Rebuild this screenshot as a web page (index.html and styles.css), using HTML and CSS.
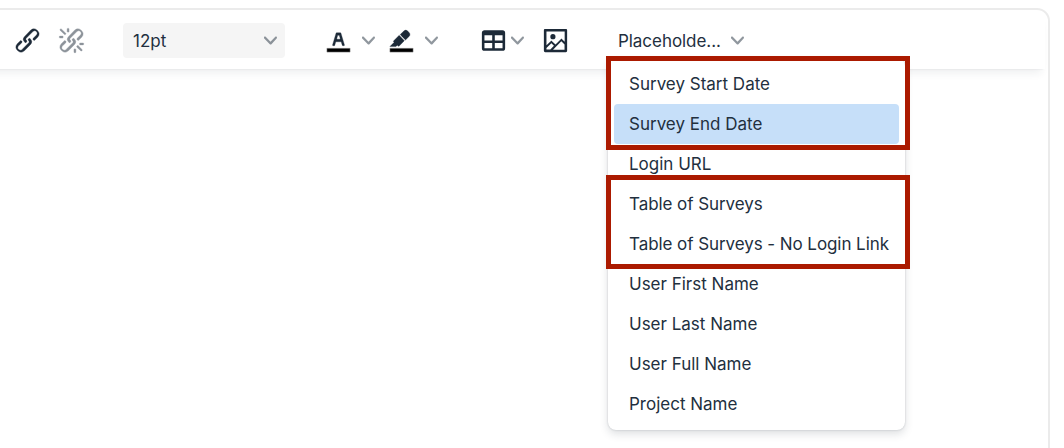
FILE: index.html
```html
<!DOCTYPE html>
<html lang="en">
<head>
<meta charset="utf-8">
<title>Email editor</title>
<link rel="stylesheet" href="styles.css">
</head>
<body>
<svg class="defs" aria-hidden="true">
  <symbol id="chevron" viewBox="0 0 10 10"><path d="M8.7 2.2c.3-.3.8-.3 1 0 .4.4.4.9 0 1.2L5.7 7.8c-.3.3-.9.3-1.2 0L.2 3.4a.8.8 0 0 1 0-1.2c.3-.3.8-.3 1.1 0L5 6l3.7-3.8Z"/></symbol>
  <symbol id="link" viewBox="0 0 24 24"><path d="M6.2 12.3a1 1 0 0 1 1.4 1.4l-2 2a2 2 0 1 0 2.6 2.8l4.8-4.8a1 1 0 0 0 0-1.4 1 1 0 1 1 1.4-1.3 2.9 2.9 0 0 1 0 4L9.6 20a3.9 3.9 0 0 1-5.5-5.5l2-2Zm11.6-.6a1 1 0 0 1-1.4-1.4l2-2a2 2 0 1 0-2.6-2.8L11 10.3a1 1 0 0 0 0 1.4A1 1 0 1 1 9.6 13a2.9 2.9 0 0 1 0-4L14.4 4a3.9 3.9 0 0 1 5.5 5.5l-2 2Z"/></symbol>
</svg>
<div class="editor">
  <div class="toolbar">
    <button class="btn" aria-label="Link"><svg class="icon heavy"><use href="#link"/></svg></button>
    <button class="btn disabled" aria-label="Remove link"><svg class="icon heavy" viewBox="0 0 24 24"><use href="#link" width="24" height="24"/><path d="M7.6 6.3a.8.8 0 0 1-1 1.1L3.3 4.2a.7.7 0 1 1 1-1l3.2 3.1ZM5.1 8.6a.8.8 0 0 1 0 1.5H3a.8.8 0 0 1 0-1.5H5Zm5-3.5a.8.8 0 0 1-1.5 0V3a.8.8 0 0 1 1.5 0V5Zm6 11.8a.8.8 0 0 1 1-1l3.2 3.2a.8.8 0 0 1-1 1L16 17Zm-2.2 2a.8.8 0 0 1 1.5 0V21a.8.8 0 0 1-1.5 0V19Zm5-3.5a.7.7 0 1 1 0-1.5H21a.8.8 0 0 1 0 1.5H19Z"/></svg></button>
    <button class="select size"><span>12pt</span><svg class="chevron"><use href="#chevron"/></svg></button>
    <button class="split color" aria-label="Text color"><svg class="icon" viewBox="0 0 24 24"><path class="swatch" d="M3 18h18v3H3z"/><path class="heavy" d="M8.7 16h-.8a.5.5 0 0 1-.5-.6l2.7-9c.1-.3.3-.4.5-.4h2.8c.2 0 .4.1.5.4l2.7 9a.5.5 0 0 1-.5.6h-.8a.5.5 0 0 1-.4-.4l-.7-2.2c0-.3-.3-.4-.5-.4h-3.4c-.2 0-.4.1-.5.4l-.7 2.2c0 .3-.2.4-.4.4Zm2.6-7.6-.6 2a.5.5 0 0 0 .5.6h1.6a.5.5 0 0 0 .5-.6l-.6-2c0-.3-.3-.4-.5-.4h-.4c-.2 0-.4.1-.5.4Z"/></svg><svg class="chevron"><use href="#chevron"/></svg></button>
    <button class="split" aria-label="Background color"><svg class="icon" viewBox="0 0 24 24"><path class="swatch" d="M3 18h18v3H3z"/><path class="heavy" d="M7.7 16.7H3l3.3-3.3-.7-.8L10.2 8l4 4.1-4 4.2c-.2.2-.6.2-.8 0l-.6-.7-1.1 1.1Zm5-7.5L11 7.4l3-2.9a2 2 0 0 1 2.6 0L18 6c.7.7.7 2 0 2.7l-2.9 2.9-1.8-1.8-.5-.6Z"/></svg><svg class="chevron"><use href="#chevron"/></svg></button>
    <button class="split table" aria-label="Table"><svg class="icon" viewBox="0 0 24 24"><path d="M19 4a2 2 0 0 1 2 2v12a2 2 0 0 1-2 2H5a2 2 0 0 1-2-2V6c0-1.1.9-2 2-2h14ZM5 14v4h6v-4H5Zm14 0h-6v4h6v-4Zm0-6h-6v4h6V8ZM5 12h6V8H5v4Z"/></svg><svg class="chevron"><use href="#chevron"/></svg></button>
    <button class="btn image" aria-label="Insert image"><svg class="icon" viewBox="0 0 24 24"><path d="m5 15.7 3.3-3.2c.3-.3.7-.3 1 0L12 15l4.1-4c.3-.4.8-.4 1 0l2 1.9V5H5v10.7ZM5 18V19h3l2.8-2.9-2-2L5 17.9Zm14-3-2.5-2.4-6.4 6.5H19v-4ZM4 3h16c.6 0 1 .4 1 1v16c0 .6-.4 1-1 1H4a1 1 0 0 1-1-1V4c0-.6.4-1 1-1Zm6 8a2 2 0 1 0 0-4 2 2 0 0 0 0 4Z"/></svg></button>
    <button class="select placeholders"><span>Placeholde...</span><svg class="chevron"><use href="#chevron"/></svg></button>
  </div>
</div>
<div class="menu">
  <div class="item">Survey Start Date</div>
  <div class="item active">Survey End Date</div>
  <div class="item">Login URL</div>
  <div class="item tight">Table of Surveys</div>
  <div class="item tight">Table of Surveys - No Login Link</div>
  <div class="item">User First Name</div>
  <div class="item">User Last Name</div>
  <div class="item">User Full Name</div>
  <div class="item">Project Name</div>
</div>
<div class="callout dates"></div>
<div class="callout tables"></div>
</body>
</html>
```
FILE: styles.css
```css
* { box-sizing: border-box; }
body {
  margin: 0;
  height: 448px;
  padding-top: 8px;
  position: relative;
  overflow: hidden;
  background: #fff;
  color: #222f3e;
  font: 17px/24px Inter, "Liberation Sans", sans-serif;
}
.defs { position: absolute; width: 0; height: 0; }
.editor {
  width: 1050px;
  height: 460px;
  border: 2px solid #ebebeb;
  border-left: 0;
  border-radius: 0 13px 0 0;
}
.toolbar {
  display: flex;
  align-items: center;
  width: 1065px;
  height: 59px;
  margin-left: -20px;
  padding: 2px 0 0 25px;
  background: #fff;
  border-radius: 0 11px 0 0;
  box-shadow: 0 2px 2px -2px rgba(34,47,62,.14), 0 8px 8px -4px rgba(34,47,62,.08);
}
button {
  border: 0;
  padding: 0;
  background: none;
  color: inherit;
  font: inherit;
  display: flex;
  align-items: center;
  height: 35px;
  flex: none;
}
.btn { width: 44px; justify-content: center; }
.disabled { opacity: .5; }
.icon { width: 31px; height: 31px; fill: #1d2a38; flex: none; display: block; }
.heavy { stroke: #1d2a38; stroke-width: .25; }
.swatch { fill: #000; stroke: #aaa; stroke-width: .35; }
.chevron { width: 13px; height: 13px; fill: #222f3e; fill-opacity: .5; flex: none; }
.select { justify-content: space-between; }
.size {
  width: 162px;
  margin-left: 30px;
  padding: 0 8px 0 10px;
  background: #f5f5f5;
  border-radius: 4px;
}
.split { width: 63px; padding-left: 6px; gap: 8px; }
.color { margin-left: 32px; }
.split.table { margin-left: 30px; padding-left: 5px; gap: 2px; width: 54px; }
.image { margin-left: 6px; }
.placeholders { width: 126px; margin-left: 41px; letter-spacing: -.05px; }
.menu {
  position: absolute;
  left: 608px;
  top: 58px;
  width: 297px;
  padding: 6px;
  background: #fff;
  border-radius: 8px;
  box-shadow: 0 0 2px rgba(34,47,62,.24), 0 4px 9px rgba(34,47,62,.15);
}
.item { height: 40px; padding: 0 15px; line-height: 40px; border-radius: 4px; white-space: nowrap; }
.tight { letter-spacing: -.07px; }
.active { background: #c6dff9; }
.callout {
  position: absolute;
  left: 606px;
  width: 304px;
  border: 5px solid #ab1a00;
}
.dates { top: 56px; height: 94px; }
.tables { top: 175px; height: 94px; }
```
